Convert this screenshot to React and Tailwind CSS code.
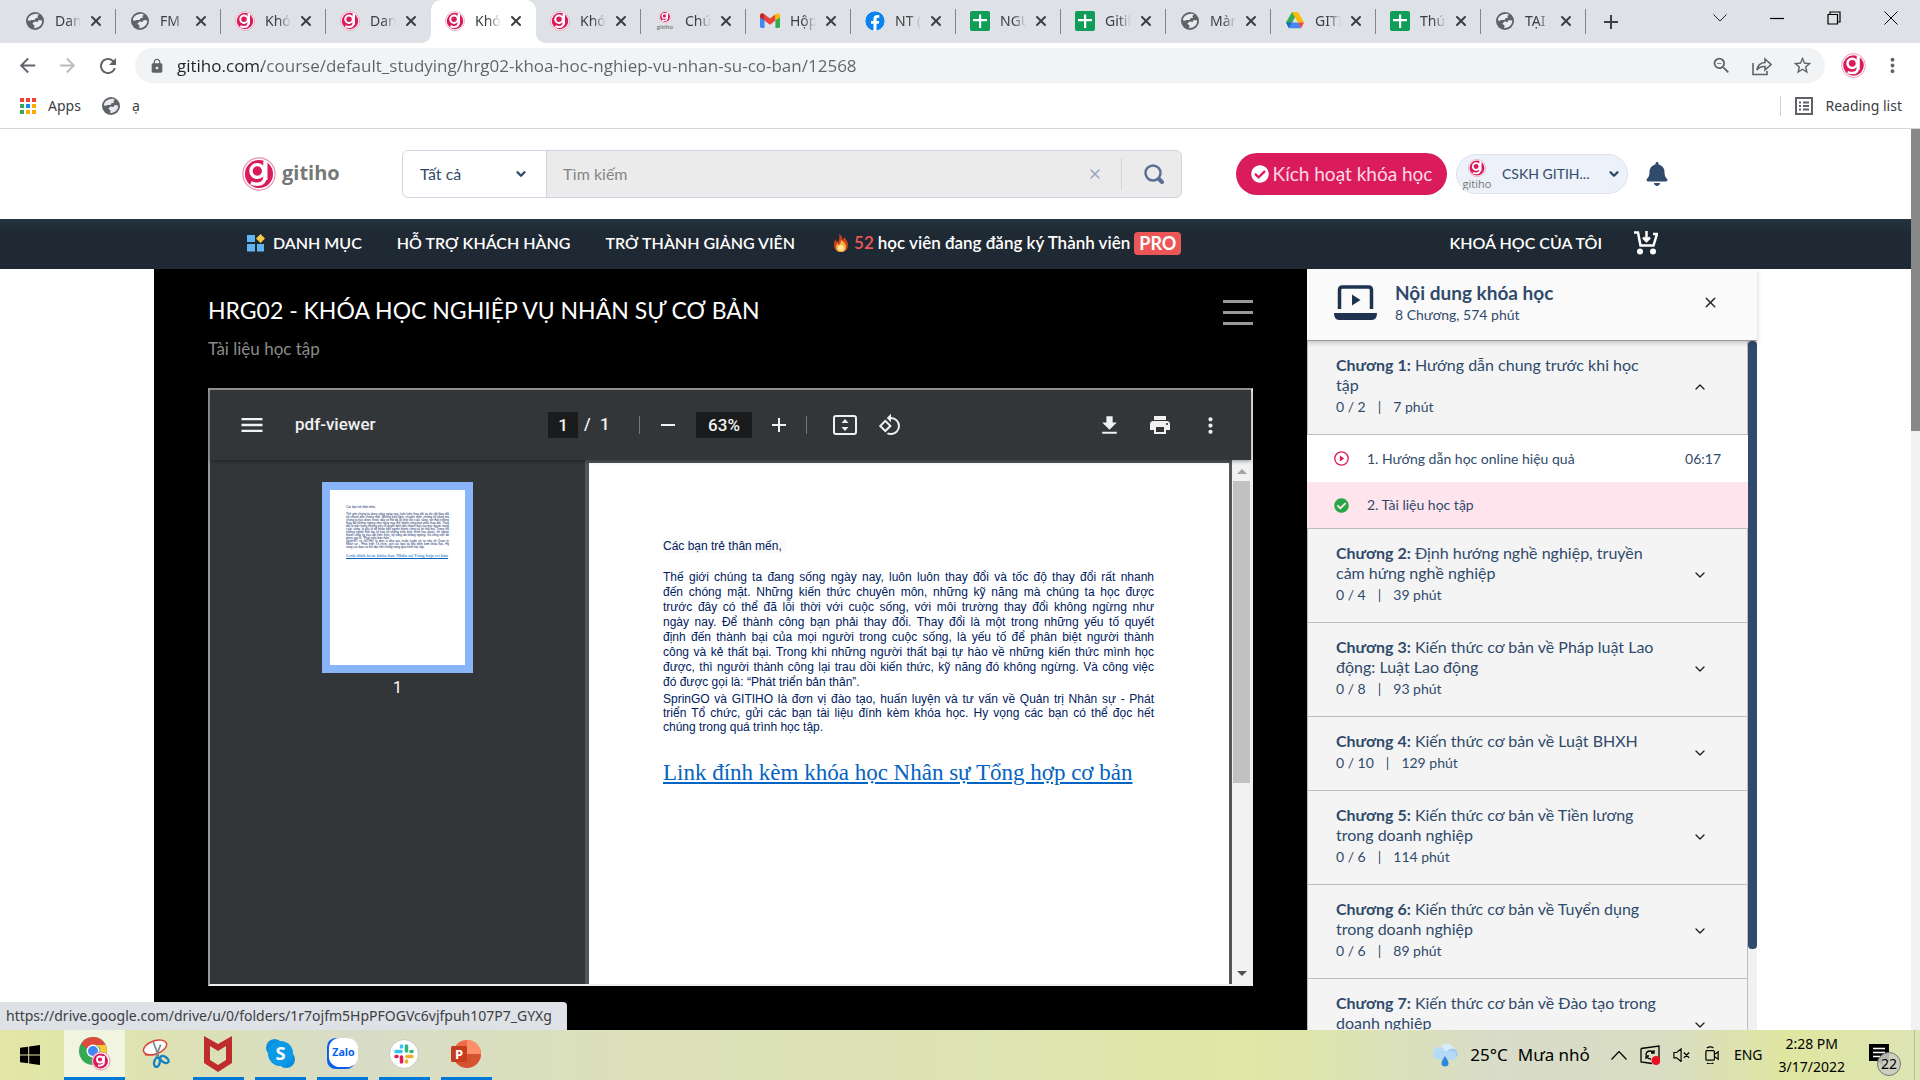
import { useState } from 'react';
import {
  MdAdd,
  MdArrowBack,
  MdArrowForward,
  MdFileDownload,
  MdLock,
  MdMenu,
  MdMoreVert,
  MdPrint,
  MdRefresh,
  MdRemove,
  MdRotate90DegreesCcw,
  MdStarBorder,
  MdZoomOut,
} from 'react-icons/md';
import { FaBell, FaCheckCircle, FaFacebook } from 'react-icons/fa';
import { ChevronDown, ChevronUp, X } from 'lucide-react';

function GitihoMark({ className }) {
  return (
    <svg viewBox="0 0 40 40" className={className} aria-hidden="true">
      <circle cx="20" cy="20" r="19" fill="#fff" stroke="#e88fae" strokeWidth="1.400" />
      <circle cx="20" cy="20" r="16.500" fill="#d91b5c" />
      <circle cx="18" cy="16.500" r="7.500" fill="none" stroke="#fff" strokeWidth="4" />
      <path d="M27 5v18q0 9-9 9-4 0-7.500-1.500" fill="none" stroke="#fff" strokeWidth="4" />
      <path d="M28 5v22" stroke="#fff" strokeWidth="4" />
    </svg>
  );
}

function GlobeIcon() {
  return (
    <svg viewBox="0 0 20 20" className="w-[18px]" aria-hidden="true">
      <circle cx="10" cy="10" r="10" fill="#5f6368" />
      <path d="M8 2.500q4-1.500 6.500.500l-2 1.500 1 2-3 .500-1 2H6L3.500 10 2 9q.500-4.500 6-6.500z" fill="#e8eaed" />
      <path d="m9.500 10.500 3.500.500 1-2 4 .500q0 5-4.500 7.500L9 18l.500-3-2.500-2z" fill="#e8eaed" />
    </svg>
  );
}

function GitihoSmall() {
  return (
    <span className="flex flex-col items-center">
      <GitihoMark className="h-3 w-3" />
      <span className="font-['Open_Sans',sans-serif] text-[6px] font-semibold leading-[8px] text-[#777]">gitiho</span>
    </span>
  );
}

function GmailIcon() {
  return (
    <svg viewBox="0 0 24 18" className="w-5" aria-hidden="true">
      <path d="M0 3v13q0 2 2 2h3.500V7z" fill="#4285f4" />
      <path d="M24 3v13q0 2-2 2h-3.500V7z" fill="#34a853" />
      <path d="M5.500 1.500 12 6.500l6.500-5V9L12 14 5.500 9z" fill="#ea4335" />
      <path d="M18.500 1.500Q21 0 22.500.500 24 1.200 24 3v2l-5.500 4z" fill="#fbbc04" />
      <path d="M5.500 1.500Q3 0 1.500.500 0 1.200 0 3v2l5.500 4z" fill="#c5221f" />
    </svg>
  );
}

function SheetsIcon() {
  return (
    <svg viewBox="0 0 20 20" className="w-5" aria-hidden="true">
      <rect width="20" height="20" rx="2" fill="#0f9d58" />
      <path d="M9 3.500h2.200V8H17v2.200h-5.800V17H9v-6.800H3V8h6z" fill="#fff" />
    </svg>
  );
}

function DriveIcon() {
  return (
    <svg viewBox="0 0 24 22" className="w-[18px]" aria-hidden="true">
      <path d="M8 0h8l-4 7z" fill="#188038" />
      <path d="M8 0 0 14l4 7.500L12 7z" fill="#34a853" />
      <path d="M16 0h-8l8 14h8z" fill="#fbbc04" />
      <path d="M0 14h8l-4 7.500z" fill="#1967d2" />
      <path d="M8 14h8l4 7.500H4z" fill="#4285f4" />
      <path d="M16 14h8l-4 7.500z" fill="#ea4335" />
    </svg>
  );
}

const favicons = {
  globe: <GlobeIcon />,
  gitiho: <GitihoMark className="h-5 w-5" />,
  small: <GitihoSmall />,
  gmail: <GmailIcon />,
  facebook: <FaFacebook size={20} className="rounded-full bg-white text-[#0b84ee]" />,
  sheets: <SheetsIcon />,
  drive: <DriveIcon />,
};

const tabs = [
  { icon: 'globe', title: 'Dan' },
  { icon: 'globe', title: 'FM' },
  { icon: 'gitiho', title: 'Khó' },
  { icon: 'gitiho', title: 'Dan' },
  { icon: 'gitiho', title: 'Khó', active: true },
  { icon: 'gitiho', title: 'Khó' },
  { icon: 'small', title: 'Chú' },
  { icon: 'gmail', title: 'Hộp' },
  { icon: 'facebook', title: 'NT (' },
  { icon: 'sheets', title: 'NGU' },
  { icon: 'sheets', title: 'Gitih' },
  { icon: 'globe', title: 'Màn' },
  { icon: 'drive', title: 'GITI' },
  { icon: 'sheets', title: 'Thú' },
  { icon: 'globe', title: 'TẠI' },
];

function Tab({ tab, divider }) {
  return (
    <div
      className={`relative flex h-full w-[105px] shrink-0 items-center pb-[2px] pl-[14px] ${
        tab.active ? 'rounded-t-[10px] bg-white' : ''
      }`}
    >
      <span className="flex w-5 justify-center">{favicons[tab.icon]}</span>
      <span className="ml-[10px] w-[26px] overflow-hidden whitespace-nowrap text-sm text-[#3c4043] [mask-image:linear-gradient(to_right,black_50%,transparent)]">
        {tab.title}
      </span>
      <button aria-label="Close tab" className="ml-[7px] text-[#3c4043]">
        <X size={16} strokeWidth={3} />
      </button>
      {divider && <span className="absolute right-0 top-[9px] h-[25px] w-px bg-[#80868b]" />}
      {tab.active && (
        <>
          <span className="absolute -left-[10px] bottom-0 h-[10px] w-[10px] bg-[radial-gradient(circle_at_0_0,transparent_10px,white_10px)]" />
          <span className="absolute -right-[10px] bottom-0 h-[10px] w-[10px] bg-[radial-gradient(circle_at_100%_0,transparent_10px,white_10px)]" />
        </>
      )}
    </div>
  );
}

function WindowControls() {
  return (
    <div className="ml-auto flex h-[36px] items-center">
      <button aria-label="Search tabs" className="flex w-[57px] justify-center">
        <svg viewBox="0 0 14 8" className="w-[14px]" fill="none" stroke="#222"><path d="m.5.500 6.500 6.500 6.500-6.500" /></svg>
      </button>
      <button aria-label="Minimize" className="flex w-[57px] justify-center">
        <svg viewBox="0 0 14 14" className="w-[14px]" stroke="#000" strokeWidth="1.200"><path d="M0 7.500h14" /></svg>
      </button>
      <button aria-label="Restore" className="flex w-[57px] justify-center">
        <svg viewBox="0 0 14 14" className="w-[14px]" fill="none" stroke="#000" strokeWidth="1.200">
          <path d="M1 3.500h9.500V13H1zM3 3.500V1h10v10h-2.500" />
        </svg>
      </button>
      <button aria-label="Close" className="flex w-[58px] justify-center">
        <svg viewBox="0 0 14 14" className="w-[14px]" stroke="#000"><path d="m.5.500 13 13M13.500.500l-13 13" /></svg>
      </button>
    </div>
  );
}

const appColors = [
  'bg-[#f44336]', 'bg-[#f44336]', 'bg-[#f44336]',
  'bg-[#34a853]', 'bg-[#1e88e5]', 'bg-[#fbab00]',
  'bg-[#34a853]', 'bg-[#fbab00]', 'bg-[#fbab00]',
];

function BrowserChrome() {
  return (
    <header className="shrink-0 border-b border-[#d5d7da] bg-white font-['Noto_Sans','Open_Sans',sans-serif]">
      <div className="flex h-[43px] bg-[#dee1e6] pl-[11px]">
        {tabs.map((tab, i) => (
          <Tab key={i} tab={tab} divider={!tab.active && !tabs[i + 1]?.active} />
        ))}
        <button aria-label="New tab" className="ml-[13px] text-[#3c4043]">
          <MdAdd size={24} />
        </button>
        <WindowControls />
      </div>

      <div className="flex h-[45px] items-center pl-4">
        <button aria-label="Back" className="w-10 text-[#5f6368]"><MdArrowBack size={23} /></button>
        <button aria-label="Forward" className="w-10 text-[#babcbe]"><MdArrowForward size={23} /></button>
        <button aria-label="Reload" className="w-[39px] text-[#5f6368]"><MdRefresh size={24} /></button>
        <div className="flex h-[35px] flex-1 items-center rounded-full bg-[#f1f3f4] pl-[14px] pr-3 text-[#5f6368]">
          <MdLock size={16} />
          <input
            aria-label="Address"
            className="ml-3 flex-1 bg-[linear-gradient(90deg,#202124_85px,#5f6368_85px)] bg-clip-text font-['Open_Sans',sans-serif] text-[17px] text-transparent outline-none"
            defaultValue="gitiho.com/course/default_studying/hrg02-khoa-hoc-nghiep-vu-nhan-su-co-ban/12568"
          />
          <div className="flex items-center gap-5">
            <button aria-label="Zoom"><MdZoomOut size={21} /></button>
            <button aria-label="Share">
              <svg viewBox="0 0 20 20" className="w-5" fill="none" stroke="currentColor" strokeWidth="1.600">
                <path d="M1 7v11.500h14V15M5 14q1-7 8-7.500V3l6 5.500-6 5.500v-3.500q-5-.500-8 3.500z" />
              </svg>
            </button>
            <button aria-label="Bookmark"><MdStarBorder size={21} /></button>
          </div>
        </div>
        <button aria-label="Profile" className="ml-4"><GitihoMark className="h-[25px] w-[25px]" /></button>
        <button aria-label="Menu" className="ml-[15px] mr-4 text-[#5f6368]"><MdMoreVert size={23} /></button>
      </div>

      <div className="flex h-[40px] items-center pb-1 pl-5 pr-[18px] text-sm text-[#3c4043]">
        <a href="#apps" className="flex items-center gap-3">
          <span className="grid grid-cols-3 gap-[2px]">
            {appColors.map((color, i) => (
              <span key={i} className={`h-[4px] w-[4px] ${color}`} />
            ))}
          </span>
          Apps
        </a>
        <a href="#bookmark" className="ml-[21px] flex items-center gap-3">
          <GlobeIcon /> ạ
        </a>
        <button className="ml-auto flex items-center gap-3 border-l border-[#cdd0d4] pl-[14px]">
          <svg viewBox="0 0 18 18" className="w-[18px]" fill="none" stroke="#5f6368" strokeWidth="2">
            <path d="M1 1h16v16H1zM4 5.500h2M8 5.500h6M4 9h2M8 9h6M4 12.500h2M8 12.500h6" />
          </svg>
          Reading list
        </button>
      </div>
    </header>
  );
}

function SiteHeader() {
  return (
    <div className="flex h-[90px] shrink-0 items-center bg-white pl-[242px] text-[#304a6b]">
      <a href="#home" className="flex w-[160px] items-center gap-[6px]">
        <GitihoMark className="h-[34px] w-[34px]" />
        <span className="pb-[2px] font-['Open_Sans',sans-serif] text-[20px] font-bold leading-6 text-[#777]">gitiho</span>
      </a>
      <form className="flex h-12 w-[780px] overflow-hidden rounded-md border border-[#cfd4e0] bg-[#ebebeb]">
        <div className="relative w-[144px] border-r border-[#cfd4e0] bg-white">
          <select aria-label="Danh mục" className="h-full w-full appearance-none pl-[17px] text-base outline-none">
            <option>Tất cả</option>
          </select>
          <ChevronDown size={14} strokeWidth={4} className="pointer-events-none absolute right-[18px] top-4" />
        </div>
        <input
          aria-label="Tìm kiếm"
          placeholder="Tìm kiếm"
          className="flex-1 bg-transparent pl-4 text-base outline-none placeholder:text-[#858585]"
        />
        <button type="reset" aria-label="Xóa" className="mr-[18px] text-[#94a3bd]"><X size={16} /></button>
        <button aria-label="Tìm" className="my-[7px] flex w-[60px] items-center justify-center border-l border-[#cfd4e0] pl-1 text-[#5b7093]">
          <svg viewBox="0 0 20 20" className="w-5" fill="none" stroke="currentColor">
            <circle cx="9" cy="9" r="7.500" strokeWidth="2.500" />
            <path d="m15 15 3 3" strokeWidth="4" strokeLinecap="round" />
          </svg>
        </button>
      </form>
      <button className="ml-[54px] flex h-[42px] w-[211px] items-center justify-center gap-1 rounded-full bg-[#da1b5c] text-[19px] text-[#ffd9e5]">
        <FaCheckCircle size={18} className="text-white" />
        Kích hoạt khóa học
      </button>
      <button className="ml-[9px] flex h-10 w-[172px] items-center rounded-full border border-[#dde2ea] bg-[#edf1f9] pl-[5px] text-sm">
        <span className="flex w-[30px] flex-col items-center overflow-hidden">
          <GitihoMark className="h-[18px] w-[18px]" />
          <span className="font-['Open_Sans',sans-serif] text-[11px] leading-[13px] text-[#777]">gitiho</span>
        </span>
        <span className="ml-[10px]">CSKH GITIH...</span>
        <ChevronDown size={14} strokeWidth={4} className="ml-auto mr-[6px]" />
      </button>
      <button aria-label="Thông báo" className="ml-[17px]"><FaBell size={24} /></button>
    </div>
  );
}

function SiteNav() {
  return (
    <nav className="flex h-[50px] shrink-0 items-center bg-linear-to-b from-[#24323e] to-[#1f2933] to-30% pb-[2px] pl-[247px] text-base font-semibold text-white">
      <a href="#categories" className="flex items-center gap-2">
        <svg viewBox="0 0 18 18" className="w-[18px]" aria-hidden="true">
          <path d="M0 1h8v7H0zM0 10h8v7.500H0zM10 10h7v7.500h-7z" fill="#62b5f0" />
          <path d="M13.500 0 18 4.500 13.500 9 9 4.500z" fill="#f5c946" />
        </svg>
        DANH MỤC
      </a>
      <a href="#support" className="ml-[35px]">HỖ TRỢ KHÁCH HÀNG</a>
      <a href="#teach" className="ml-[35px]">TRỞ THÀNH GIẢNG VIÊN</a>
      <a href="#pro" className="ml-[39px] flex items-center text-[17px]">
        <svg viewBox="0 0 14 18" className="mr-[6px] w-[14px]" aria-hidden="true">
          <path d="M5 0q4 2 3 6 2-1 2-3 4 4 4 8 0 7-7 7t-7-7q0-4 2-6 0 3 2 3 2-3 1-8z" fill="#c9421b" />
          <path d="M7 6q5 3 5 7 0 5-5 5t-5-5q0-2 2-4 0 2 1 2 2-2 2-5z" fill="#ffb23e" />
          <circle cx="7" cy="14" r="3" fill="#ffe3a1" />
        </svg>
        <span className="mr-1 text-[#eb5757]">52</span>
        <span className="mr-1">học viên đang đăng ký Thành viên</span>
        <span className="rounded bg-[#eb5757] px-[5px] text-[18px] font-bold leading-[23px]">PRO</span>
      </a>
      <a href="#my-courses" className="ml-auto">KHOÁ HỌC CỦA TÔI</a>
      <a href="#cart" aria-label="Giỏ hàng" className="ml-8 mr-[253px]">
        <svg viewBox="0 0 24 24" className="w-6" fill="none" stroke="#fff" strokeWidth="2.500">
          <path d="M0 1.500h4l2.500 13h13L23 3h-4M12.500 0v9M9 6.500l3.500 3.500L16 6.500" />
          <circle cx="6" cy="20.500" r="3" fill="#fff" stroke="none" />
          <circle cx="19" cy="20.500" r="3" fill="#fff" stroke="none" />
        </svg>
      </a>
    </nav>
  );
}

const greeting = 'Các bạn trẻ thân mến,';

const intro = [
  'Thế giới chúng ta đang sống ngày nay, luôn luôn thay đổi và tốc độ thay đổi rất nhanh',
  'đến chóng mặt. Những kiến thức chuyên môn, những kỹ năng mà chúng ta học được',
  'trước đây có thể đã lỗi thời với cuộc sống, với môi trường thay đổi không ngừng như',
  'ngày nay. Để thành công bạn phải thay đổi. Thay đổi là một trong những yếu tố quyết',
  'định đến thành bại của mọi người trong cuộc sống, là yếu tố để phân biệt người thành',
  'công và kẻ thất bại. Trong khi những người thất bại tự hào về những kiến thức mình học',
  'được, thì người thành công lại trau dồi kiến thức, kỹ năng đó không ngừng. Và công việc',
  'đó được gọi là: “Phát triển bản thân”.',
];

const about = [
  'SprinGO và GITIHO là đơn vị đào tạo, huấn luyện và tư vấn về Quản trị Nhân sự - Phát',
  'triển Tổ chức, gửi các bạn tài liệu đính kèm khóa học. Hy vọng các bạn có thể đọc hết',
  'chúng trong quá trình học tập.',
];

const linkText = 'Link đính kèm khóa học Nhân sự Tổng hợp cơ bản';

// Every line but the last one is stretched to both margins
function Paragraph({ lines, className }) {
  return (
    <p className={className}>
      {lines.map((line) => (
        <span key={line} className="block whitespace-nowrap [text-align-last:justify] last:[text-align-last:left]">
          {line}
        </span>
      ))}
    </p>
  );
}

function PdfToolbar() {
  return (
    <div className="relative z-10 flex h-[70px] shrink-0 items-center bg-[#323639] pl-7 pr-7 text-[17px] font-medium text-[#f1f1f1] shadow-[0_1px_4px_rgba(0,0,0,0.4)]">
      <div className="flex w-[310px] items-center">
        <button aria-label="Menu" className="w-[57px]"><MdMenu size={28} /></button>
        <span>pdf-viewer</span>
      </div>
      <div className="flex items-center">
        <input aria-label="Page" defaultValue="1" className="h-[26px] w-[30px] bg-[#191b1c] text-center" />
        <span className="ml-[6px] w-4">/</span>
        <span className="w-[39px]">1</span>
        <span className="h-[18px] w-px bg-[#74777a]" />
        <button aria-label="Zoom out" className="mx-4"><MdRemove size={24} /></button>
        <input aria-label="Zoom level" defaultValue="63%" className="h-[26px] w-14 bg-[#191b1c] text-center" />
        <button aria-label="Zoom in" className="mx-[15px]"><MdAdd size={24} /></button>
        <span className="h-[18px] w-px bg-[#74777a]" />
        <button aria-label="Fit to page" className="ml-[26px]">
          <svg viewBox="0 0 24 20" className="w-6">
            <rect x="1" y="1" width="22" height="18" rx="2" fill="none" stroke="currentColor" strokeWidth="2" />
            <path d="m12 4 3.500 4h-7zM12 16l3.500-4h-7z" fill="currentColor" />
          </svg>
        </button>
        <button aria-label="Rotate" className="ml-[21px]"><MdRotate90DegreesCcw size={24} /></button>
      </div>
      <div className="ml-auto flex items-center gap-[26px]">
        <button aria-label="Download"><MdFileDownload size={25} /></button>
        <button aria-label="Print"><MdPrint size={24} /></button>
        <button aria-label="More"><MdMoreVert size={25} /></button>
      </div>
    </div>
  );
}

function PdfViewer() {
  return (
    <section className="mt-[27px] flex flex-1 flex-col border-2 border-[#9a9a9a] border-b-[#eee] border-r-[#eee] bg-[#525659] font-[Roboto,sans-serif]">
      <PdfToolbar />
      <div className="flex flex-1">
        <aside className="flex w-[375px] shrink-0 flex-col items-center bg-[#323639] pt-[22px] text-base text-white">
          <div className="h-[191px] w-[151px] border-8 border-[#8ab4f8] bg-white px-4 pt-4 font-['Liberation_Sans',Arial,sans-serif] text-[3px] leading-[3px] text-[#002060]">
            <p className="mb-1">{greeting}</p>
            <p className="text-justify">{intro.join(' ')}</p>
            <p className="text-justify">{about.join(' ')}</p>
            <p className="mt-1 whitespace-nowrap font-['Liberation_Serif',serif] text-[5px] leading-[6px] text-[#0563c1] underline">
              {linkText}
            </p>
          </div>
          <span className="mt-[3px]">1</span>
        </aside>
        <div className="ml-1 mt-[3px] flex-1 bg-white pl-[74px] pr-[75px] pt-[76px] font-['Liberation_Sans',Arial,sans-serif] text-xs text-[#002060]">
          <p className="leading-[15px]">
            <span className="bg-[#fafafa] pr-1">{greeting}</span>
          </p>
          <Paragraph lines={intro} className="mt-4 leading-[15px]" />
          <Paragraph lines={about} className="mt-[2px] leading-[14px]" />
          <a
            href="https://drive.google.com/drive/u/0/folders/1r7ojfm5HpPFOGVc6vjfpuh107P7_GYXg"
            className="mt-6 block whitespace-nowrap font-['Liberation_Serif','Times_New_Roman',serif] text-[23px] leading-[30px] text-[#0563c1] underline"
          >
            {linkText}
          </a>
        </div>
        <div className="ml-[3px] flex w-[19px] flex-col items-center bg-[#f1f1f1] pb-2 pt-[9px]">
          <span className="border-x-[5px] border-b-[5px] border-x-transparent border-b-[#a3a3a3]" />
          <span className="mt-[7px] h-[302px] w-[17px] bg-[#c1c1c1]" />
          <span className="mt-auto border-x-[5px] border-t-[5px] border-x-transparent border-t-[#505050]" />
        </div>
      </div>
    </section>
  );
}

const chapters = [
  {
    name: 'Chương 1:',
    title: 'Hướng dẫn chung trước khi học tập',
    done: '0 / 2',
    length: '7 phút',
    lessons: [
      { title: '1. Hướng dẫn học online hiệu quả', time: '06:17' },
      { title: '2. Tài liệu học tập', current: true },
    ],
  },
  { name: 'Chương 2:', title: 'Định hướng nghề nghiệp, truyền cảm hứng nghề nghiệp', done: '0 / 4', length: '39 phút' },
  { name: 'Chương 3:', title: 'Kiến thức cơ bản về Pháp luật Lao động: Luật Lao động', done: '0 / 8', length: '93 phút' },
  { name: 'Chương 4:', title: 'Kiến thức cơ bản về Luật BHXH', done: '0 / 10', length: '129 phút' },
  { name: 'Chương 5:', title: 'Kiến thức cơ bản về Tiền lương trong doanh nghiệp', done: '0 / 6', length: '114 phút' },
  { name: 'Chương 6:', title: 'Kiến thức cơ bản về Tuyển dụng trong doanh nghiệp', done: '0 / 6', length: '89 phút' },
  { name: 'Chương 7:', title: 'Kiến thức cơ bản về Đào tạo trong doanh nghiệp', done: '', length: '' },
];

function Lesson({ lesson }) {
  return (
    <a
      href="#lesson"
      className={`flex items-center pl-[27px] pr-[27px] text-sm ${lesson.current ? 'h-[46px] bg-[#fee4ec]' : 'h-[47px] bg-white'}`}
    >
      {lesson.current ? (
        <FaCheckCircle size={15} className="text-[#28a745]" />
      ) : (
        <svg viewBox="0 0 15 15" className="w-[15px]">
          <circle cx="7.500" cy="7.500" r="6.700" fill="none" stroke="#da1b5c" strokeWidth="1.300" />
          <path d="M5.800 4.600v5.800l4.400-2.900z" fill="#da1b5c" />
        </svg>
      )}
      <span className="ml-[18px]">{lesson.title}</span>
      <span className="ml-auto">{lesson.time}</span>
    </a>
  );
}

function Chapter({ chapter, defaultOpen }) {
  const [open, setOpen] = useState(defaultOpen);
  const Arrow = open ? ChevronUp : ChevronDown;

  return (
    <li>
      <button
        onClick={() => setOpen(!open)}
        aria-expanded={open}
        className="flex w-full items-center border-x border-b border-[#bdbdbd] bg-[#f4f4f4] pb-4 pl-7 pr-[39px] pt-[14px] text-left"
      >
        <span className="w-[324px]">
          <span className="block text-base leading-5">
            <b className="font-bold">{chapter.name}</b> {chapter.title}
          </span>
          <span className="block h-[23px] text-sm leading-6">
            {chapter.done}
            {chapter.done && <span className="mx-3">|</span>}
            {chapter.length}
          </span>
        </span>
        <Arrow size={16} className="ml-auto text-[#222]" />
      </button>
      {open && chapter.lessons && (
        <div className="border-b border-[#bdbdbd]">
          {chapter.lessons.map((lesson) => (
            <Lesson key={lesson.title} lesson={lesson} />
          ))}
        </div>
      )}
    </li>
  );
}

function CourseContent() {
  return (
    <aside className="flex w-[450px] shrink-0 flex-col bg-[#fafafa] text-[#304a6b]">
      <div className="relative z-10 flex h-[72px] shrink-0 items-center border-b border-[#999] pb-1 pl-[27px] pr-[38px] shadow-[0_2px_5px_rgba(0,0,0,0.2)]">
        <svg viewBox="0 0 43 35" className="w-[43px]" aria-hidden="true">
          <path d="M5.500 24V5q0-3 3-3h26q3 0 3 3v19" fill="none" stroke="#1f3350" strokeWidth="3.500" />
          <path d="M18 9.500 26.500 15 18 20.500z" fill="#1f3350" />
          <path d="M0 28h43q0 7-5 7H5q-5 0-5-7z" fill="#1f3350" />
        </svg>
        <div className="ml-[18px]">
          <h2 className="text-[19px] font-bold leading-6">Nội dung khóa học</h2>
          <p className="text-sm leading-5">8 Chương, 574 phút</p>
        </div>
        <button aria-label="Đóng" className="ml-auto text-[#222]"><X size={17} /></button>
      </div>
      <div className="flex min-h-0 flex-1">
        <ul className="flex-1 overflow-hidden">
          {chapters.map((chapter, i) => (
            <Chapter key={chapter.name} chapter={chapter} defaultOpen={i === 0} />
          ))}
        </ul>
        <div className="w-[9px] bg-[#f1f1f1]">
          <div className="h-[608px] rounded bg-[#304a6b]" />
        </div>
      </div>
    </aside>
  );
}

function ChromeIcon() {
  return (
    <svg viewBox="0 0 32 36" className="w-8" aria-hidden="true">
      <circle cx="14" cy="15" r="14" fill="#34a853" />
      <path d="M14 1a14 14 0 0 1 12.500 8H14a6 6 0 0 0-5.500 4L2 8A14 14 0 0 1 14 1z" fill="#dd4b3e" />
      <path d="M26.500 9A14 14 0 0 1 14 29l5.500-10A6 6 0 0 0 17 9z" fill="#fcc934" />
      <circle cx="14" cy="15" r="6.500" fill="#fff" />
      <circle cx="14" cy="15" r="5" fill="#4285f4" />
      <circle cx="22" cy="25" r="9" fill="#fff" stroke="#e88fae" />
      <circle cx="21.500" cy="25" r="7.500" fill="#d91b5c" />
      <circle cx="21" cy="23.500" r="3" fill="none" stroke="#fff" strokeWidth="1.800" />
      <path d="M25 20v6q0 4-6 3.500" fill="none" stroke="#fff" strokeWidth="1.800" />
    </svg>
  );
}

function SnipIcon() {
  return (
    <svg viewBox="0 0 30 32" className="w-7" fill="none" aria-hidden="true">
      <ellipse cx="14" cy="9" rx="13" ry="7" fill="#fff" stroke="#d9453b" strokeWidth="1.600" transform="rotate(-20 14 9)" />
      <path d="M3 17h10" stroke="#d9453b" strokeWidth="1.500" />
      <path d="m12 3 6 16M20 6l-5 13" stroke="#7b8790" strokeWidth="1.800" />
      <ellipse cx="16" cy="25" rx="3" ry="5" stroke="#1581c4" strokeWidth="2.500" transform="rotate(12 16 25)" />
      <ellipse cx="24" cy="22" rx="3" ry="5" stroke="#1581c4" strokeWidth="2.500" transform="rotate(-55 24 22)" />
    </svg>
  );
}

function McAfeeIcon() {
  return (
    <svg viewBox="0 0 28 36" className="w-7" aria-hidden="true">
      <path d="M0 0 14 8 28 0v27l-14 9-14-9zM6 10v14l8 5 8-5V10l-8 5z" fill="#bf2c2c" fillRule="evenodd" />
    </svg>
  );
}

function SkypeIcon() {
  return (
    <svg viewBox="0 0 30 30" className="w-[29px]" aria-hidden="true">
      <circle cx="9" cy="9" r="9" fill="#0b8de0" />
      <circle cx="21" cy="21" r="9" fill="#0b8de0" />
      <circle cx="15" cy="15" r="13" fill="#0c9ae6" />
      <text x="15" y="22" textAnchor="middle" fontFamily="Open Sans" fontWeight="700" fontSize="19" fill="#fff">S</text>
    </svg>
  );
}

function ZaloIcon() {
  return (
    <svg viewBox="0 0 32 32" className="w-[31px]" aria-hidden="true">
      <rect width="29" height="32" rx="9" fill="#0a5fe8" />
      <rect x="2" y="0" width="30" height="30" rx="11" fill="#fff" />
      <text x="17" y="19" textAnchor="middle" fontFamily="Open Sans" fontWeight="700" fontSize="11" fill="#0a62f0">Zalo</text>
    </svg>
  );
}

function SlackIcon() {
  return (
    <svg viewBox="0 0 30 30" className="w-[30px]" fill="none" strokeWidth="3.600" strokeLinecap="round" aria-hidden="true">
      <circle cx="15" cy="15" r="14.500" fill="#fff" stroke="#c8c8c8" strokeWidth="1" />
      <path d="M7 12.500h5M12.500 7v1" stroke="#36c5f0" />
      <path d="M17.500 7v5M22 12.500h1" stroke="#2eb67d" />
      <path d="M18 17.500h5M17.500 22v1" stroke="#ecb22e" />
      <path d="M12.500 18v5M7 17.500h1" stroke="#e01e5a" />
    </svg>
  );
}

function PowerPointIcon() {
  return (
    <svg viewBox="0 0 30 30" className="w-[30px]" aria-hidden="true">
      <circle cx="16" cy="15" r="14" fill="#ed6c47" />
      <path d="M16 1a14 14 0 0 1 14 14H16z" fill="#ff8f6b" />
      <path d="M30 15a14 14 0 0 1-27 5l13-5z" fill="#d35230" />
      <rect x="0" y="7" width="16" height="16" rx="1.500" fill="#c43e1c" />
      <text x="8" y="20" textAnchor="middle" fontFamily="Open Sans" fontWeight="700" fontSize="13" fill="#fff">P</text>
    </svg>
  );
}

const taskbarApps = [
  { name: 'Snipping Tool', icon: <SnipIcon /> },
  { name: 'McAfee', icon: <McAfeeIcon />, running: true },
  { name: 'Skype', icon: <SkypeIcon />, running: true },
  { name: 'Zalo', icon: <ZaloIcon />, running: true },
  { name: 'Slack', icon: <SlackIcon />, running: true },
  { name: 'PowerPoint', icon: <PowerPointIcon />, running: true },
];

function Taskbar() {
  return (
    <footer className="flex h-[50px] shrink-0 items-center bg-linear-[90deg,#e2e7a5_0%,#dfe4ad_5%,#d8dcc6_18%,#dce1b8_35%,#dde3b4_50%,#dfe8a4_65%,#d8dcc8_78%,#d9ddc2_87%,#dfe6a0_93%,#dde4b4_100%] font-['Noto_Sans','Open_Sans',sans-serif] text-black">
      <button aria-label="Start" className="flex w-16 justify-center pr-1">
        <svg viewBox="0 0 20 20" className="w-5">
          <path d="M0 2.800 8.200 1.700v7.800H0zM9.200 1.500 20 0v9.500H9.200zM0 10.500h8.200v7.800L0 17.200zM9.200 10.500H20V20L9.200 18.500z" />
        </svg>
      </button>
      <button aria-label="Chrome" className="flex h-full w-[61px] items-center justify-center border-b-[3px] border-[#0078d7] bg-[#f1f4df]">
        <ChromeIcon />
      </button>
      {taskbarApps.map((app) => (
        <button key={app.name} aria-label={app.name} className="flex h-full w-[62px] justify-center">
          <span
            className={`flex h-full w-[51px] items-center justify-center border-b-[3px] ${
              app.running ? 'border-[#0078d7]' : 'border-transparent'
            }`}
          >
            {app.icon}
          </span>
        </button>
      ))}

      <div className="ml-auto flex h-full items-center">
        <button className="flex items-center text-[17px]">
          <svg viewBox="0 0 26 24" className="mr-3 w-[26px]" aria-hidden="true">
            <circle cx="15" cy="7" r="6.500" fill="#d8ecfc" />
            <circle cx="7" cy="10" r="6" fill="#b9dcf9" />
            <circle cx="20" cy="11" r="5.500" fill="#9ccdf6" />
            <rect x="2" y="8" width="22" height="8.500" rx="4.200" fill="#b5daf8" />
            <path d="M13 13q3.500 5 3.500 7.500 0 3-3.500 3t-3.500-3q0-2.500 3.500-7.500z" fill="#2b8ae0" />
          </svg>
          <span className="mr-[10px]">25°C</span>
          <span>Mưa nhỏ</span>
        </button>
        <div className="ml-[21px] flex items-center gap-[13px]">
          <svg viewBox="0 0 16 9" className="w-4" fill="none" stroke="#000" strokeWidth="1.200"><path d="m.5 8.500 7.500-8 7.500 8" /></svg>
          <svg viewBox="0 0 20 20" className="w-5" fill="none" stroke="#000" strokeWidth="1.300">
            <path d="M1 3.500 19 1v13M1 3.500V17l11 1.500M6 10q0-4 4-4 3 0 4 2M14 5v3h-3M6 14v-3h3M7 12q1 2 4 2" />
            <circle cx="16" cy="15.500" r="4.500" fill="#e81123" stroke="none" />
          </svg>
          <svg viewBox="0 0 20 16" className="w-[18px]" fill="none" stroke="#000" strokeWidth="1.300">
            <path d="M1 5v6h3l5 4V1L4 5zM12 5l6 6M18 5l-6 6" />
          </svg>
          <svg viewBox="0 0 18 20" className="w-[17px]" fill="none" stroke="#000" strokeWidth="1.300">
            <path d="M2 6q0-1 1-1h7q1 0 1 1v8q0 1-1 1H3q-1 0-1-1zM11 9l4-3v8l-4-3M3 2q4-2 7 0M3 18q4 2 7 0" />
          </svg>
          <span className="text-sm">ENG</span>
        </div>
        <div className="ml-4 text-center text-sm leading-[23px]">
          <div>2:28 PM</div>
          <div>3/17/2022</div>
        </div>
        <button aria-label="Notifications" className="relative ml-6 mr-[25px] w-5">
          <svg viewBox="0 0 20 22" className="w-5">
            <path d="M0 0h20v17h-6v5l-6-5H0z" />
            <path d="M4 4.500h12M4 8.500h12M4 12.500h7" stroke="#fff" strokeWidth="1.400" />
          </svg>
          <span className="absolute -bottom-[10px] left-2 flex h-6 w-6 items-center justify-center rounded-full border border-[#777] bg-[#c9ccc0]/90 text-sm leading-4">
            22
          </span>
        </button>
        <span className="mr-[5px] h-full w-px bg-[#b9bea0]" />
      </div>
    </footer>
  );
}

export default function App() {
  return (
    <div className="flex h-screen flex-col overflow-hidden bg-white">
      <BrowserChrome />
      <div className="relative flex min-h-0 flex-1 font-[Lato,'Noto_Sans',sans-serif]">
        <div className="flex min-w-0 flex-1 flex-col">
          <SiteHeader />
          <SiteNav />
          <div className="flex min-h-0 flex-1 px-[154px]">
            <main className="flex min-w-0 flex-1 flex-col bg-black px-[54px] pb-11 pt-[25px]">
              <div className="flex items-start justify-between">
                <div>
                  <h1 className="text-[23px] leading-8 text-white">HRG02 - KHÓA HỌC NGHIỆP VỤ NHÂN SỰ CƠ BẢN</h1>
                  <p className="mt-[10px] text-[17px] leading-[25px] text-[#8b8b8b]">Tài liệu học tập</p>
                </div>
                <button aria-label="Danh sách bài học" className="mt-[6px] flex w-[30px] flex-col gap-2">
                  <span className="h-[3px] w-full bg-[#999]" />
                  <span className="h-[3px] w-full bg-[#999]" />
                  <span className="h-[3px] w-full bg-[#999]" />
                </button>
              </div>
              <PdfViewer />
            </main>
            <CourseContent />
          </div>
        </div>
        <div className="w-[9px] shrink-0 bg-[#f1f1f1]">
          <div className="h-[302px] bg-[#888]" />
        </div>
        <div className="absolute bottom-0 left-0 z-20 h-7 w-[567px] rounded-tr bg-[#dee1e6] pl-[6px] font-['Noto_Sans','Open_Sans',sans-serif] text-sm leading-7 text-[#3c4043]">
          https://drive.google.com/drive/u/0/folders/1r7ojfm5HpPFOGVc6vjfpuh107P7_GYXg
        </div>
      </div>
      <Taskbar />
    </div>
  );
}
